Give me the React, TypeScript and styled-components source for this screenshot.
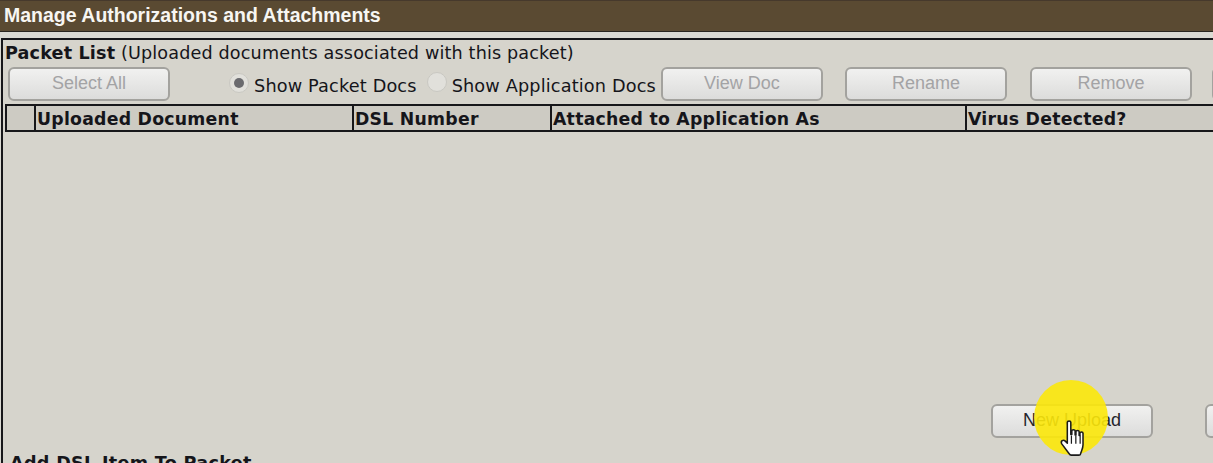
import styled, { createGlobalStyle } from "styled-components";

const GlobalStyle = createGlobalStyle`
  html, body {
    margin: 0;
    padding: 0;
    background: #dbdad3;
  }
`;

const Page = styled.div`
  position: relative;
  width: 1213px;
  height: 463px;
  overflow: hidden;
  background: #dbdad3;
  font-family: "DejaVu Sans", sans-serif;
  color: #15151a;
`;
const TitleBar = styled.div`
  height: 32px;
  box-sizing: border-box;
  border-top: 1px solid #46392c;
  border-bottom: 1px solid #29251f;
  padding-left: 4px;
  background: #5a4a32;
  color: #f7f6f2;
  font: bold 19.5px/29px "Liberation Sans", Arial, sans-serif;
`;
const Panel = styled.section`
  box-sizing: border-box;
  width: 1240px;
  height: 440px;
  margin: 6px 0 0 1px;
  border: 2px solid #17171a;
  background: #d6d4cc;
`;
const Heading = styled.div`
  box-sizing: border-box;
  height: 27px;
  padding: 1px 0 0 2px;
  font-size: 17.6px;
  line-height: 24px;
  letter-spacing: 0.15px;
  white-space: nowrap;
`;
const Toolbar = styled.div`
  display: flex;
  align-items: flex-start;
  height: 37px;
  padding-left: 5px;
`;
const Button = styled.button<{ $enabled?: boolean; $gap?: number }>`
  flex: none;
  box-sizing: border-box;
  width: 162px;
  height: 34px;
  margin-left: ${(p) => p.$gap ?? 0}px;
  padding: 0 0 2px;
  border: 2px solid #a3a29e;
  border-radius: 6px;
  background: linear-gradient(#f1f1f0, #dcdcdb);
  color: ${(p) => (p.$enabled ? "#25252c" : "#a3a3a5")};
  font: 18px "Liberation Sans", Arial, sans-serif;
`;
const RadioLabel = styled.label<{ $gap: number }>`
  display: flex;
  flex: none;
  margin-left: ${(p) => p.$gap}px;
  font-size: 17.7px;
  line-height: 24px;
  letter-spacing: 0.15px;
  white-space: nowrap;
`;
const RadioDot = styled.span<{ $checked?: boolean }>`
  flex: none;
  box-sizing: border-box;
  display: flex;
  align-items: center;
  justify-content: center;
  width: 20px;
  height: 20px;
  margin: ${(p) => (p.$checked ? 6 : 5)}px 5px 0 0;
  border: 1px solid #c9c8c2;
  border-radius: 50%;
  background: #e1e0db;
  &::after {
    content: "";
    display: ${(p) => (p.$checked ? "block" : "none")};
    width: 10px;
    height: 10px;
    border-radius: 50%;
    background: #6a6a6e;
  }
`;
const RadioText = styled.span`
  padding-top: 7px;
`;
const Table = styled.div`
  display: grid;
  grid-template-columns: 29px 318px 198px 415px 1fr;
  box-sizing: border-box;
  height: 28px;
  margin-left: 2px;
  border-top: 2px solid #17171a;
  border-bottom: 2px solid #17171a;
  border-left: 2px solid #17171a;
  background: #cdcbc3;
`;
const HeaderCell = styled.div`
  padding-left: 1px;
  border-right: 2px solid #17171a;
  font-size: 17.3px;
  font-weight: bold;
  line-height: 26px;
  letter-spacing: 0.25px;
  white-space: nowrap;
  &:last-child {
    border-right: none;
  }
`;
const ListArea = styled.div`
  height: 272px;
`;
const UploadRow = styled.div`
  display: flex;
  height: 47px;
  padding-left: 988px;
`;
const SubHeading = styled.div`
  padding-left: 7px;
  font-size: 17.6px;
  font-weight: bold;
  line-height: 24px;
  letter-spacing: 0.3px;
  white-space: nowrap;
`;
const Highlight = styled.div`
  position: absolute;
  left: 1034px;
  top: 380px;
  width: 74px;
  height: 75px;
  border-radius: 50%;
  background: rgba(252, 232, 10, 0.9);
`;
const Pointer = styled.svg`
  position: absolute;
  left: 1058px;
  top: 419px;
  width: 33px;
  height: 39px;
`;

const columns = ["", "Uploaded Document", "DSL Number", "Attached to Application As", "Virus Detected?"];

export default function App() {
  return (
    <Page>
      <GlobalStyle />
      <TitleBar>Manage Authorizations and Attachments</TitleBar>
      <Panel>
        <Heading>
          <b>Packet List</b> (Uploaded documents associated with this packet)
        </Heading>
        <Toolbar>
          <Button disabled>Select All</Button>
          <RadioLabel $gap={59}>
            <RadioDot $checked />
            <RadioText>Show Packet Docs</RadioText>
          </RadioLabel>
          <RadioLabel $gap={10}>
            <RadioDot />
            <RadioText>Show Application Docs</RadioText>
          </RadioLabel>
          <Button disabled $gap={5}>View Doc</Button>
          <Button disabled $gap={22}>Rename</Button>
          <Button disabled $gap={23}>Remove</Button>
          <Button disabled $gap={20} />
        </Toolbar>
        <Table>
          {columns.map((c, i) => (
            <HeaderCell key={i}>{c}</HeaderCell>
          ))}
        </Table>
        <ListArea />
        <UploadRow>
          <Button $enabled>New Upload</Button>
          <Button $enabled $gap={52} />
        </UploadRow>
        <SubHeading>Add DSL Item To Packet</SubHeading>
      </Panel>
      <Highlight />
      <Pointer viewBox="0 0 30 38">
        <path
          d="M8 3.2c0-1.6 3.4-1.6 3.4 0V15l1 0V11.5c0-1.5 3.2-1.5 3.2 0V15.5h.8V12.3c0-1.5 3.1-1.5 3.1 0V16h.8v-2.2c0-1.5 3-1.4 3 .1V25c0 3.5-1.6 6-2.3 8.6 0 1-.6 1.6-1.6 1.6h-7.6c-1 0-1.6-.6-2-1.4L2.6 24.2c-1.5-2.6 1.4-4.6 3.4-2.6L8 23.6Z"
          fill="#fff"
          stroke="#1b1b1b"
          strokeWidth="1.5"
          strokeLinejoin="round"
        />
        <path d="M12 16v8M16.3 16v8M20.5 16v8" stroke="#1b1b1b" strokeWidth="1.2" fill="none" />
      </Pointer>
    </Page>
  );
}
